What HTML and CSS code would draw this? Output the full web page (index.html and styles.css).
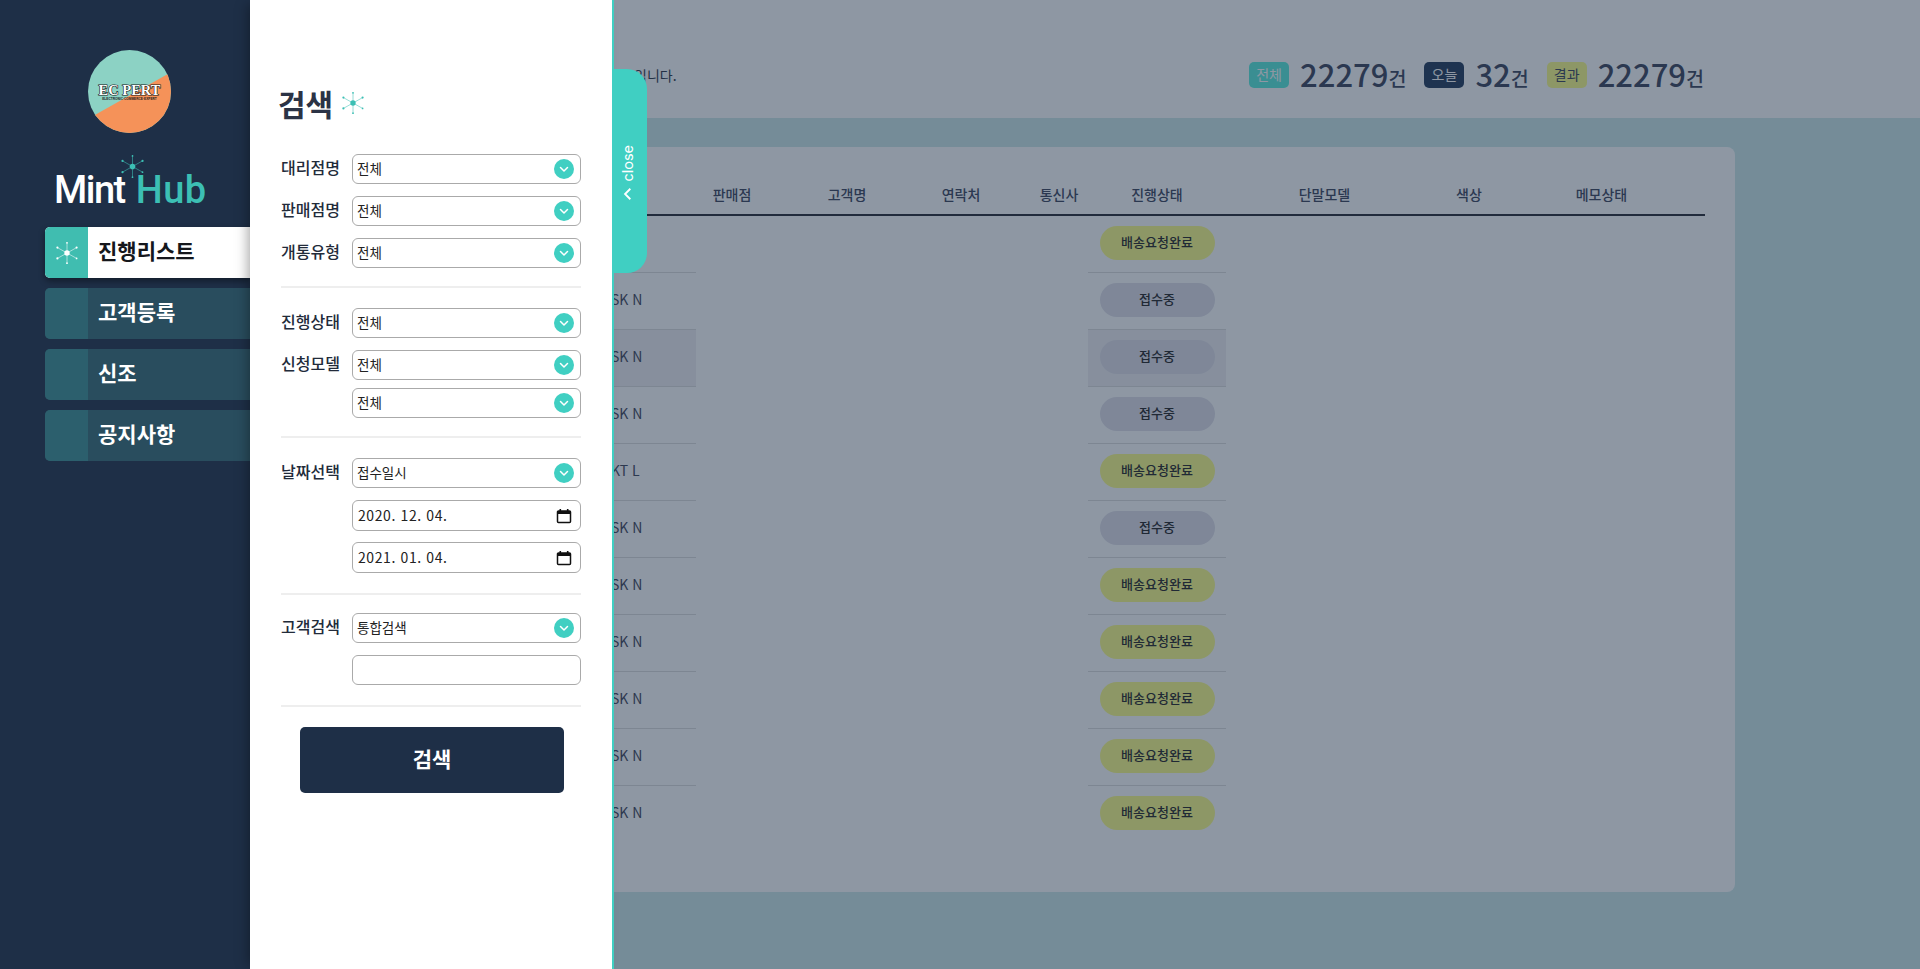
FILE: index.html
```html
<!DOCTYPE html>
<html lang="ko">

<head>
  <meta charset="UTF-8" />
  <meta name="viewport" content="width=device-width, initial-scale=1.0" />
  <title>Mint Hub 진행리스트</title>
  <link rel="stylesheet" href="styles.css">
</head>

<body>
  <svg class="sprite" aria-hidden="true">
    <symbol id="spark" viewBox="0 0 40 40">
      <g stroke="currentColor" stroke-width="0.9">
        <line x1="20" y1="20" x2="20" y2="2" />
        <line x1="20" y1="20" x2="20" y2="38" />
        <line x1="20" y1="20" x2="4" y2="11" />
        <line x1="20" y1="20" x2="36" y2="11" />
        <line x1="20" y1="20" x2="4" y2="29" />
        <line x1="20" y1="20" x2="36" y2="29" />
      </g>
      <g fill="currentColor">
        <circle cx="20" cy="20" r="4.5" />
        <circle cx="20" cy="3" r="1.4" />
        <circle cx="20" cy="37" r="1.4" />
        <circle cx="4" cy="11" r="1.8" />
        <circle cx="36" cy="11" r="1.8" />
        <circle cx="4" cy="29" r="1.8" />
        <circle cx="36" cy="29" r="1.4" />
      </g>
    </symbol>
    <symbol id="calendar" viewBox="0 0 16 16">
      <path d="M2.5 3h11a1 1 0 0 1 1 1v9.5a1 1 0 0 1-1 1h-11a1 1 0 0 1-1-1V4a1 1 0 0 1 1-1z" fill="none" stroke="currentColor" stroke-width="1.5" />
      <rect x="1.5" y="3" width="13" height="3" fill="currentColor" />
      <rect x="3.5" y="1" width="1.6" height="2.5" fill="currentColor" />
      <rect x="10.9" y="1" width="1.6" height="2.5" fill="currentColor" />
    </symbol>
    <symbol id="chevron" viewBox="0 0 20 20">
      <path d="M6.5 8.5 10 12l3.5-3.5" fill="none" stroke="#fff" stroke-width="1.5" stroke-linecap="round" stroke-linejoin="round" />
    </symbol>
  </svg>

  <div class="layout">
    <aside class="sidebar">
      <svg class="brand-badge" viewBox="0 0 83 83">
        <defs>
          <clipPath id="badge-clip">
            <circle cx="41.5" cy="41.5" r="41.5" />
          </clipPath>
        </defs>
        <g clip-path="url(#badge-clip)">
          <rect width="83" height="83" fill="#8cd2c4" />
          <polygon points="85,21 5,66 5,90 85,90" fill="#f59259" />
        </g>
        <text class="badge-title" x="41.5" y="45">EC PERT</text>
        <text class="badge-sub" x="41.5" y="49.5">ELECTRONIC·COMMERCE·EXPERT</text>
      </svg>

      <div class="wordmark">
        <svg class="wordmark-spark"><use href="#spark" /></svg>
        <span class="wordmark-mint">Mint</span> <span class="wordmark-hub">Hub</span>
      </div>

      <nav class="menu">
        <a class="menu-item active">
          <span class="menu-icon"><svg><use href="#spark" /></svg></span>
          <span class="menu-label">진행리스트</span>
        </a>
        <a class="menu-item">
          <span class="menu-icon"></span>
          <span class="menu-label">고객등록</span>
        </a>
        <a class="menu-item">
          <span class="menu-icon"></span>
          <span class="menu-label">신조</span>
        </a>
        <a class="menu-item">
          <span class="menu-icon"></span>
          <span class="menu-label">공지사항</span>
        </a>
      </nav>
    </aside>

    <main class="main">
      <header class="topbar">
        <p class="topbar-msg">입니다.</p>
        <div class="stats">
          <div class="stat">
            <span class="chip chip-mint">전체</span>
            <strong class="stat-num">22279</strong><span class="stat-unit">건</span>
          </div>
          <div class="stat">
            <span class="chip chip-navy">오늘</span>
            <strong class="stat-num">32</strong><span class="stat-unit">건</span>
          </div>
          <div class="stat">
            <span class="chip chip-olive">결과</span>
            <strong class="stat-num">22279</strong><span class="stat-unit">건</span>
          </div>
        </div>
      </header>

      <section class="card">
        <table class="list-table">
          <colgroup>
            <col class="col-hidden">
            <col class="col-carrier">
            <col class="col-shop">
            <col class="col-name">
            <col class="col-phone">
            <col class="col-telecom">
            <col class="col-status">
            <col class="col-model">
            <col class="col-color">
            <col class="col-memo">
          </colgroup>
          <thead>
            <tr>
              <th></th>
              <th></th>
              <th class="th-shop">판매점</th>
              <th>고객명</th>
              <th>연락처</th>
              <th>통신사</th>
              <th>진행상태</th>
              <th>단말모델</th>
              <th>색상</th>
              <th class="th-memo">메모상태</th>
            </tr>
          </thead>
          <tbody>
            <tr>
              <td></td><td class="td-carrier">SK N</td><td></td><td></td><td></td><td></td>
              <td class="td-status"><span class="pill pill-done">배송요청완료</span></td><td></td><td></td><td></td>
            </tr>
            <tr>
              <td></td><td class="td-carrier">SK N</td><td></td><td></td><td></td><td></td>
              <td class="td-status"><span class="pill">접수중</span></td><td></td><td></td><td></td>
            </tr>
            <tr class="row-hover">
              <td></td><td class="td-carrier">SK N</td><td></td><td></td><td></td><td></td>
              <td class="td-status"><span class="pill">접수중</span></td><td></td><td></td><td></td>
            </tr>
            <tr>
              <td></td><td class="td-carrier">SK N</td><td></td><td></td><td></td><td></td>
              <td class="td-status"><span class="pill">접수중</span></td><td></td><td></td><td></td>
            </tr>
            <tr>
              <td></td><td class="td-carrier">KT L</td><td></td><td></td><td></td><td></td>
              <td class="td-status"><span class="pill pill-done">배송요청완료</span></td><td></td><td></td><td></td>
            </tr>
            <tr>
              <td></td><td class="td-carrier">SK N</td><td></td><td></td><td></td><td></td>
              <td class="td-status"><span class="pill">접수중</span></td><td></td><td></td><td></td>
            </tr>
            <tr>
              <td></td><td class="td-carrier">SK N</td><td></td><td></td><td></td><td></td>
              <td class="td-status"><span class="pill pill-done">배송요청완료</span></td><td></td><td></td><td></td>
            </tr>
            <tr>
              <td></td><td class="td-carrier">SK N</td><td></td><td></td><td></td><td></td>
              <td class="td-status"><span class="pill pill-done">배송요청완료</span></td><td></td><td></td><td></td>
            </tr>
            <tr>
              <td></td><td class="td-carrier">SK N</td><td></td><td></td><td></td><td></td>
              <td class="td-status"><span class="pill pill-done">배송요청완료</span></td><td></td><td></td><td></td>
            </tr>
            <tr>
              <td></td><td class="td-carrier">SK N</td><td></td><td></td><td></td><td></td>
              <td class="td-status"><span class="pill pill-done">배송요청완료</span></td><td></td><td></td><td></td>
            </tr>
            <tr class="row-last">
              <td></td><td class="td-carrier">SK N</td><td></td><td></td><td></td><td></td>
              <td class="td-status"><span class="pill pill-done">배송요청완료</span></td><td></td><td></td><td></td>
            </tr>
          </tbody>
        </table>
      </section>

      <div class="dim"></div>

      <!-- search drawer, sits over the list -->
      <aside class="drawer">
        <h2 class="drawer-title">검색 <svg class="title-spark"><use href="#spark" /></svg></h2>

        <div class="group">
          <div class="row">
            <span class="row-label">대리점명</span>
            <div class="field"><span>전체</span><svg class="field-arrow"><use href="#chevron" /></svg></div>
          </div>
          <div class="row">
            <span class="row-label">판매점명</span>
            <div class="field"><span>전체</span><svg class="field-arrow"><use href="#chevron" /></svg></div>
          </div>
          <div class="row">
            <span class="row-label">개통유형</span>
            <div class="field"><span>전체</span><svg class="field-arrow"><use href="#chevron" /></svg></div>
          </div>
        </div>

        <div class="group">
          <div class="row">
            <span class="row-label">진행상태</span>
            <div class="field"><span>전체</span><svg class="field-arrow"><use href="#chevron" /></svg></div>
          </div>
          <div class="row">
            <span class="row-label">신청모델</span>
            <div class="field"><span>전체</span><svg class="field-arrow"><use href="#chevron" /></svg></div>
          </div>
          <div class="row row-sub">
            <span class="row-label"></span>
            <div class="field"><span>전체</span><svg class="field-arrow"><use href="#chevron" /></svg></div>
          </div>
        </div>

        <div class="group group-date">
          <div class="row">
            <span class="row-label">날짜선택</span>
            <div class="field"><span>접수일시</span><svg class="field-arrow"><use href="#chevron" /></svg></div>
          </div>
          <div class="row">
            <span class="row-label"></span>
            <div class="field field-date"><span>2020. 12. 04.</span><svg class="field-cal"><use href="#calendar" /></svg></div>
          </div>
          <div class="row row-tight">
            <span class="row-label"></span>
            <div class="field field-date"><span>2021. 01. 04.</span><svg class="field-cal"><use href="#calendar" /></svg></div>
          </div>
        </div>

        <div class="group group-customer">
          <div class="row">
            <span class="row-label">고객검색</span>
            <div class="field"><span>통합검색</span><svg class="field-arrow"><use href="#chevron" /></svg></div>
          </div>
          <div class="row">
            <span class="row-label"></span>
            <input class="field field-input" type="text">
          </div>
        </div>

        <button class="search-btn" type="button">검색</button>

        <button class="drawer-close" type="button">
          <span class="close-text">close</span>
          <svg class="close-arrow" viewBox="0 0 12 12"><path d="M8 1.5 3.5 6 8 10.5" fill="none" stroke="#fff" stroke-width="1.6" /></svg>
        </button>
      </aside>
    </main>
  </div>
</body>

</html>
```

FILE: styles.css
```css
:root {
  --navy: #1e2f47;
  --mint: #40cfc2;
  --font-base: "Noto Sans CJK KR", "Noto Sans", sans-serif;
}

* {
  box-sizing: border-box;
  margin: 0;
  padding: 0;
}

html,
body {
  height: 100%;
  overflow: hidden;
}

body {
  font-family: var(--font-base);
  color: #222b3a;
  background-color: #cce9e9;
}

.sprite {
  display: none;
}

.layout {
  display: flex;
  height: 969px;
}

/* sidebar */
.sidebar {
  width: 250px;
  flex-shrink: 0;
  padding-top: 50px;
  background-color: var(--navy);
}

.brand-badge {
  display: block;
  width: 83px;
  height: 83px;
  margin-left: 88px;
}

.badge-title {
  font-family: "Liberation Serif", serif;
  font-size: 14.5px;
  font-weight: 700;
  text-anchor: middle;
  fill: #fff;
  stroke: #111;
  stroke-width: 1.2px;
  paint-order: stroke;
}

.badge-sub {
  font-family: "Liberation Sans", sans-serif;
  font-size: 3.2px;
  font-weight: 700;
  text-anchor: middle;
  fill: #222;
}

.wordmark {
  position: relative;
  margin: 24px 0 0 54px;
  height: 70px;
  font-family: Roboto, sans-serif;
  font-size: 38px;
  font-weight: 500;
  line-height: 66px;
  letter-spacing: -1.5px;
  white-space: nowrap;
}

.wordmark-mint {
  color: #fff;
}

.wordmark-hub {
  margin-left: 3px;
  letter-spacing: 0.5px;
  color: #3cbfb4;
}

.wordmark-spark {
  position: absolute;
  left: 66px;
  top: -3px;
  width: 25px;
  height: 25px;
  color: #3cbfb4;
}

.menu {
  display: flex;
  flex-direction: column;
  gap: 10px;
  margin: 0 0 0 45px;
}

.menu-item {
  display: flex;
  height: 51px;
  border-radius: 5px 0 0 5px;
  overflow: hidden;
  background-color: #294d5e;
  color: #fff;
}

.menu-item.active {
  background-color: #fff;
  color: #15171c;
  box-shadow: 0 3px 6px rgba(0, 0, 0, 0.4);
}

.menu-icon {
  display: flex;
  align-items: center;
  justify-content: center;
  width: 43px;
  background-color: #2c5f6d;
  color: #fff;
}

.menu-icon svg {
  width: 24px;
  height: 24px;
}

.active .menu-icon {
  background-color: #40bdb0;
}

.menu-label {
  padding-left: 10px;
  font-size: 21px;
  font-weight: 700;
  line-height: 47px;
}

/* main area */
.main {
  position: relative;
  flex: 1;
}

.dim {
  position: absolute;
  top: 0;
  left: 0;
  right: 0;
  bottom: 0;
  background-color: rgba(30, 47, 71, 0.5);
}

.topbar {
  display: flex;
  align-items: center;
  justify-content: space-between;
  height: 118px;
  padding: 32px 216px 0 384px;
  background-color: #fff;
}

.topbar-msg {
  font-size: 14px;
  color: #2b3345;
}

.stats {
  display: flex;
  gap: 18px;
}

.stat {
  display: flex;
  align-items: center;
}

.chip {
  display: block;
  width: 40px;
  height: 26px;
  margin-right: 11px;
  border-radius: 5px;
  font-size: 14px;
  line-height: 24px;
  text-align: center;
}

.chip-mint {
  background-color: #56eddd;
  color: #fff;
}

.chip-navy {
  background-color: #1e3759;
  color: #fff;
}

.chip-olive {
  background-color: #fcff85;
  color: #384159;
}

.stat-num {
  font-size: 31px;
  font-weight: 500;
  line-height: 40px;
  margin-top: -3px;
  color: #384159;
}

.stat-unit {
  margin-top: 5px;
  font-size: 19.5px;
  font-weight: 500;
  color: #384159;
}

.card {
  width: 1455px;
  margin: 29px 0 0 30px;
  padding: 29px 30px 50px;
  background-color: #fff;
  border-radius: 8px;
}

.list-table {
  width: 1395px;
  table-layout: fixed;
  border-collapse: collapse;
}

.col-hidden { width: 290px; }
.col-carrier { width: 96px; }
.col-shop { width: 106px; }
.col-name { width: 90px; }
.col-phone { width: 138px; }
.col-telecom { width: 58px; }
.col-status { width: 138px; }
.col-model { width: 197px; }
.col-color { width: 92px; }
.col-memo { width: 190px; }

.list-table th {
  height: 39px;
  padding-bottom: 2px;
  border-bottom: 2px solid #242731;
  font-size: 14px;
  font-weight: 500;
  text-align: center;
  vertical-align: middle;
  color: #384159;
}

.list-table .th-shop {
  padding-right: 34px;
}

.list-table .th-memo {
  padding-right: 17px;
}

.list-table td {
  height: 57px;
  font-size: 14px;
  color: #3c4256;
}

.list-table .td-carrier {
  padding: 0 0 3px 11px;
  border-bottom: 1px solid #ddd;
}

.td-status {
  border-bottom: 1px solid #ddd;
  text-align: center;
}

.list-table .row-last td {
  border-bottom: none;
}

.row-hover .td-carrier,
.row-hover .td-status {
  background-color: #f0eff3;
}

.pill {
  display: inline-block;
  width: 115px;
  height: 34px;
  margin-bottom: 2px;
  border-radius: 17px;
  background-color: #e0dfe9;
  font-size: 13px;
  font-weight: 500;
  line-height: 32px;
  color: #222;
  vertical-align: middle;
}

.pill-done {
  background-color: #fcff85;
}

/* search drawer */
.drawer {
  position: absolute;
  top: 0;
  bottom: 0;
  left: 0;
  width: 364px;
  padding: 83px 0 0 31px;
  background-color: #fff;
  border-right: 2px solid var(--mint);
  box-shadow: -6px 0 12px -4px rgba(0, 0, 0, 0.35);
}

.drawer-title {
  display: flex;
  align-items: center;
  gap: 8px;
  height: 40px;
  margin: 0 0 31px -3px;
  font-size: 30px;
  font-weight: 700;
  color: #2b3345;
}

.title-spark {
  width: 24px;
  height: 24px;
  color: #3cbfb4;
}

.group {
  display: flex;
  flex-direction: column;
  gap: 12px;
  width: 300px;
  padding: 0 0 18px;
  margin-bottom: 20px;
  border-bottom: 2px solid #eee;
}

.group-date {
  padding-bottom: 20px;
  margin-bottom: 18px;
}

.group-customer {
  padding-bottom: 20px;
}

.row {
  display: flex;
}

.row-sub {
  margin-top: -4px;
}

.row-tight {
  margin-top: -1px;
}

.row-label {
  width: 71px;
  font-size: 16px;
  font-weight: 500;
  line-height: 26px;
  white-space: nowrap;
}

.field {
  position: relative;
  display: flex;
  align-items: center;
  width: 229px;
  height: 30px;
  padding: 0 4px 2px;
  border: 1px solid #aaa;
  border-radius: 6px;
  background-color: #fff;
  font-size: 13.5px;
  color: #222;
}

.field-date {
  height: 31px;
  padding-left: 5px;
  font-size: 14px;
  letter-spacing: 0.6px;
}

.field-input {
  font-family: inherit;
  outline: none;
}

.field-arrow {
  position: absolute;
  right: 6px;
  top: 4px;
  width: 20px;
  height: 20px;
  border-radius: 50%;
  background-color: var(--mint);
}

.field-cal {
  position: absolute;
  right: 8px;
  top: 7px;
  width: 16px;
  height: 16px;
  color: #111;
}

.search-btn {
  display: block;
  width: 264px;
  height: 66px;
  margin-left: 19px;
  padding-bottom: 4px;
  border: none;
  border-radius: 5px;
  background-color: var(--navy);
  font-family: inherit;
  font-size: 21px;
  font-weight: 700;
  color: #fff;
}

.drawer-close {
  position: absolute;
  top: 69px;
  left: 362px;
  display: flex;
  flex-direction: column;
  align-items: center;
  width: 35px;
  height: 204px;
  padding: 76px 3px 0 0;
  border: none;
  border-radius: 0 20px 20px 0;
  background-color: var(--mint);
  color: #fff;
}

.close-text {
  font-family: "Inter", sans-serif;
  font-size: 14.5px;
  line-height: 20px;
  writing-mode: vertical-rl;
  transform: rotate(180deg);
}

.close-arrow {
  width: 14px;
  height: 14px;
  margin-top: 5px;
}
```
